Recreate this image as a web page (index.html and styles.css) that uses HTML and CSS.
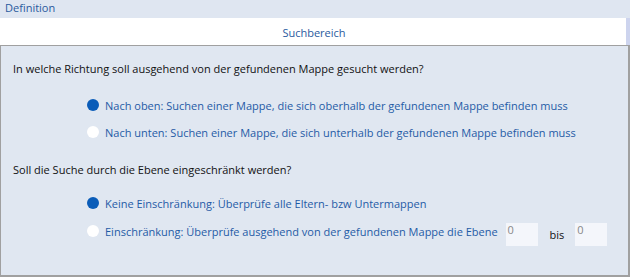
FILE: index.html
```html
<!DOCTYPE html>
<html>
<head>
<meta charset="utf-8">
<link rel="stylesheet" href="styles.css">
</head>
<body>
<div class="app">
  <div class="topbar">Definition</div>
  <div class="header">
    <div class="header-title">Suchbereich</div>
    <div class="header-strip"></div>
  </div>
  <div class="panel">
    <div class="question q1">In welche Richtung soll ausgehend von der gefundenen Mappe gesucht werden?</div>
    <div class="options">
      <div class="option"><span class="radio checked"></span><span class="label">Nach oben: Suchen einer Mappe, die sich oberhalb der gefundenen Mappe befinden muss</span></div>
      <div class="option"><span class="radio"></span><span class="label">Nach unten: Suchen einer Mappe, die sich unterhalb der gefundenen Mappe befinden muss</span></div>
    </div>
    <div class="question q2">Soll die Suche durch die Ebene eingeschränkt werden?</div>
    <div class="options options2">
      <div class="option"><span class="radio checked"></span><span class="label">Keine Einschränkung: Überprüfe alle Eltern- bzw Untermappen</span></div>
      <div class="option"><span class="radio"></span><span class="label">Einschränkung: Überprüfe ausgehend von der gefundenen Mappe die Ebene</span><span class="num first">0</span><span class="bis">bis</span><span class="num">0</span></div>
    </div>
  </div>
</div>
</body>
</html>
```
FILE: styles.css
```css
html, body {
  margin: 0;
  padding: 0;
  background: #ffffff;
}
.app {
  width: 630px;
  height: 277px;
  display: flex;
  flex-direction: column;
  font-family: "Open Sans", "Noto Sans", sans-serif;
  font-size: 11px;
}
.topbar {
  height: 18px;
  line-height: 16px;
  background: #dfe6f1;
  color: #2a5a9e;
  padding-left: 5px;
}
.header {
  display: flex;
  height: 27px;
}
.header-title {
  flex: 1;
  background: #ffffff;
  color: #2a5a9e;
  text-align: center;
  line-height: 29px;
  padding-left: 2px;
}
.header-strip {
  width: 4px;
  background: #cdd4ee;
}
.panel {
  flex: 1;
  background: #e0e7f1;
  border: 1px solid #a0a0a0;
  border-bottom-width: 2px;
  border-right-width: 2px;
  padding: 15px 0 0 12px;
}
.question {
  color: #111111;
  height: 16px;
  line-height: 16px;
}
.q2 {
  margin-top: 21px;
}
.options {
  padding-left: 74px;
  margin-top: 19px;
  display: flex;
  flex-direction: column;
  gap: 9px;
}
.options2 {
  margin-top: 16px;
  gap: 10px;
}
.option {
  display: flex;
  align-items: center;
  height: 18px;
  color: #1f5ba6;
}
.radio {
  width: 12px;
  height: 12px;
  border-radius: 50%;
  background: #ffffff;
  margin-right: 6px;
  flex: none;
}
.radio.checked {
  background: #0a5cb8;
}
.num {
  width: 32px;
  height: 23px;
  background: #f4f6fb;
  color: #888888;
  padding-left: 2px;
  box-sizing: border-box;
  line-height: 14px;
  margin-top: 6px;
}
.num.first {
  margin-left: 8px;
}
.bis {
  color: #111111;
  margin: 0 11px 0 12px;
  padding-top: 6px;
}
```
